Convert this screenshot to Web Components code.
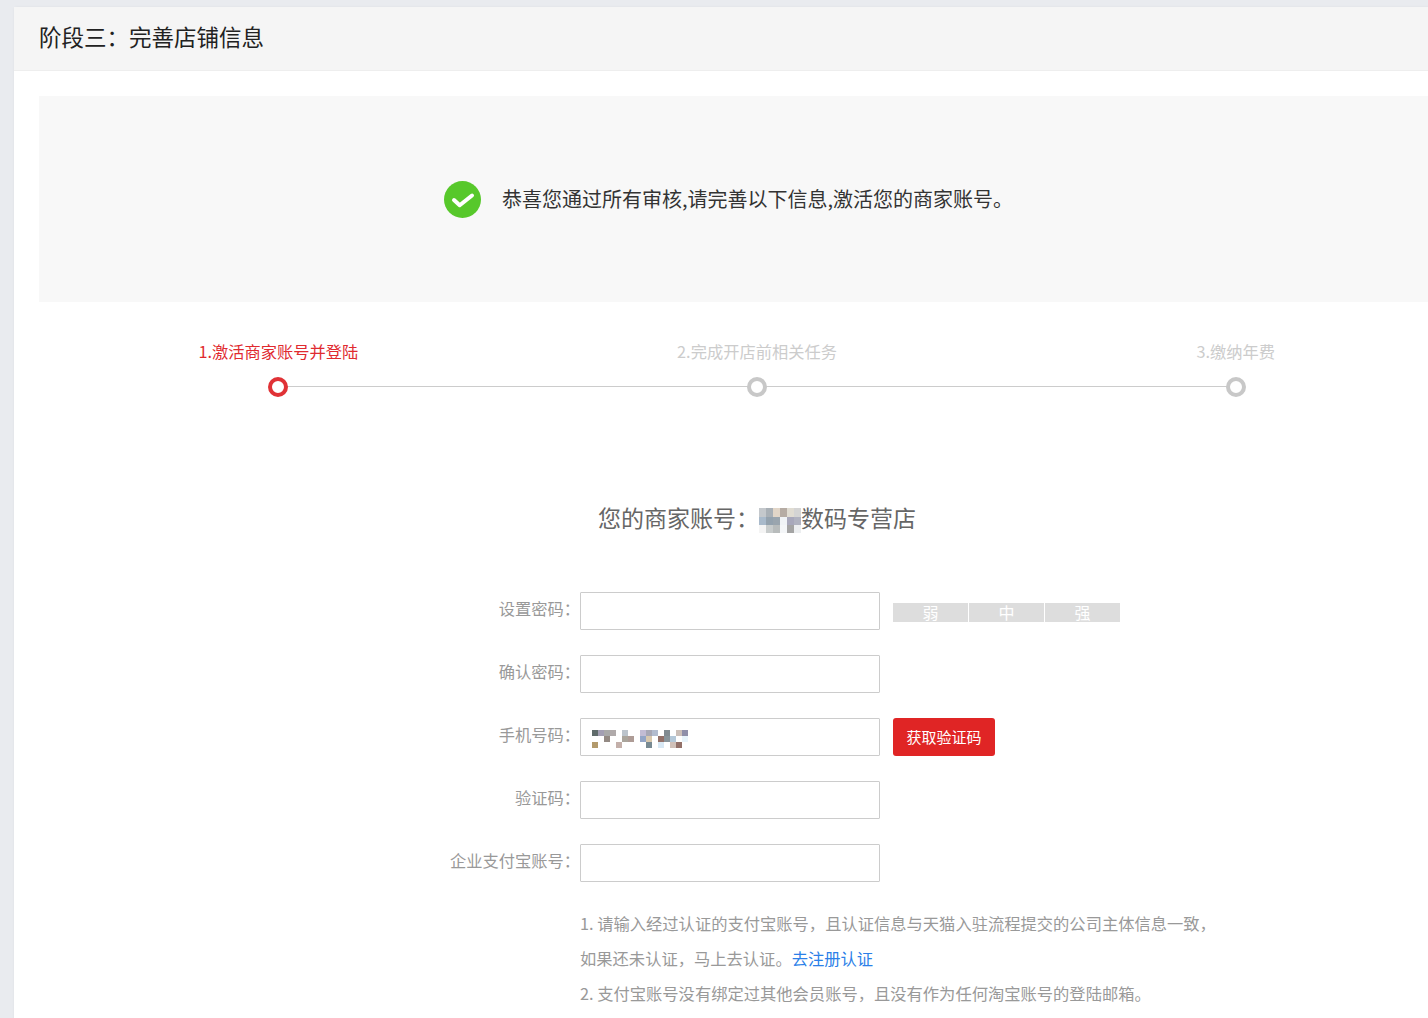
<!DOCTYPE html>
<html lang="zh-CN">
<head>
<meta charset="utf-8">
<title>阶段三</title>
<style>
html, body { margin: 0; height: 100%; overflow: hidden; }
body {
    background: #e9ebef;
    font-family: "Noto Sans CJK SC", "Liberation Sans", sans-serif;
}
</style>
</head>
<body>
<store-panel heading="阶段三：完善店铺信息">
    <notice-banner>恭喜您通过所有审核,请完善以下信息,激活您的商家账号。</notice-banner>
    <step-bar>
        <step-item class="active" active>1.激活商家账号并登陆</step-item>
        <step-item>2.完成开店前相关任务</step-item>
        <step-item last>3.缴纳年费</step-item>
    </step-bar>
    <account-title>
        您的商家账号：<mosaic-blur cell="7" cell-height="8.33" cols="6" colors="c4c8cc a9b0b6 e2d6c8 b6aca4 e0dcd2 d4d4d4|a9bacb 94a2ae 9aa5ae f0f3f6 a8a8bb b0b2c0|f4f4f4 c8cccc b8bcbc f4f6f8 a4a4a4 eceef0"></mosaic-blur>数码专营店
    </account-title>
    <form-row label="设置密码："><strength-meter slot="extra"></strength-meter></form-row>
    <form-row label="确认密码："></form-row>
    <form-row label="手机号码：">
        <mosaic-blur cell="6" cols="16" colors="5f6b6b a39fb3 a9a9a9 b0aaaa . bcc4cc . . c2bcd4 a7a7b5 b2bccf . 818b91 . cbbfb8 8f8fa9|. . 948a84 . . aaa59c ae9c96 . 93a5c6 d8c8ae . 927068 88949a b4c8d8 . e8f4fb|b39a6c . . . c4b0aa . . . . 788a92 . d8e8f4 . d0c0b8 927068 ."></mosaic-blur>
        <red-button slot="extra">获取验证码</red-button>
    </form-row>
    <form-row label="验证码："></form-row>
    <form-row label="企业支付宝账号："></form-row>
    <help-notes>
        <div>1. 请输入经过认证的支付宝账号，且认证信息与天猫入驻流程提交的公司主体信息一致，</div>
        <div>如果还未认证，马上去认证。<a href="#">去注册认证</a></div>
        <div>2. 支付宝账号没有绑定过其他会员账号，且没有作为任何淘宝账号的登陆邮箱。</div>
    </help-notes>
</store-panel>

<script>
function define(name, css, html, setup) {
    customElements.define(name, class extends HTMLElement {
        constructor() {
            super();
            const root = this.attachShadow({mode: 'open'});
            const body = typeof html === 'function' ? html(this) : html;
            root.innerHTML = `<style>${css}</style>${body}`;
            if (setup) setup(this, root);
        }
    });
}

define('store-panel', `
    :host { display: block; width: 1486px; margin: 7px 0 0 14px; background: #fff;
        border-radius: 3px 3px 0 0; box-shadow: 0 0 3px rgba(0,0,0,.05); padding-bottom: 40px; }
    header { height: 63px; box-sizing: border-box; padding: 0 0 6px 25px; display: flex; align-items: center;
        background: #f5f5f5; font-size: 22.5px; color: #222; }
    .rule { height: 1px; background: #eee; }
    .content { padding: 25px 25px 0; }
`, (el) => `<header>${el.getAttribute('heading')}</header><div class="rule"></div><div class="content"><slot></slot></div>`);

define('notice-banner', `
    :host { display: flex; align-items: center; gap: 21px; height: 206px; box-sizing: border-box;
        padding-left: 405px; background: #f8f8f8; font-size: 20px; color: #333; }
    svg { width: 37px; height: 37px; display: block; }
    span { padding-bottom: 2px; }
`, `<svg viewBox="0 0 37 37"><circle cx="18.5" cy="18.5" r="18.5" fill="#57c82b"/><path d="M10 19l5.7 5.2L28 14.5" fill="none" stroke="#fff" stroke-width="4" stroke-linecap="round" stroke-linejoin="round"/></svg><span><slot></slot></span>`);

define('step-bar', `
    :host { display: grid; grid-template-columns: repeat(3, 1fr); padding-top: 39px; }
`, `<slot></slot>`);

define('step-item', `
    :host { display: flex; flex-direction: column; align-items: center; font-size: 16.25px; line-height: 20px; color: #ccc; }
    :host([active]) { color: #e02a2f; }
    .track { position: relative; width: 100%; height: 20px; margin-top: 16px; display: flex; justify-content: center; }
    .dot { position: relative; z-index: 1; width: 20px; height: 20px; box-sizing: border-box; background: #fff;
        border: 4px solid #c8c8c8; border-radius: 50%; }
    :host([active]) .dot { border-color: #e03236; }
    .line { position: absolute; left: 50%; width: 100%; top: 9px; height: 1px; background: #ccc; }
    :host([last]) .line { display: none; }
`, `<div><slot></slot></div><div class="track"><div class="line"></div><div class="dot"></div></div>`);

define('account-title', `
    :host { display: block; margin-top: 103px; margin-bottom: 58px; text-align: center; font-size: 23px;
        line-height: 34px; color: #666; }
`, `<slot></slot>`);

// pixelated blocks standing in for text blurred out of the screenshot
define('mosaic-blur', `
    :host { display: inline-block; vertical-align: middle; line-height: 0; }
    .grid { display: grid; }
`, (el) => {
    const cell = el.getAttribute('cell');
    const cellHeight = el.getAttribute('cell-height') || cell;
    const cols = el.getAttribute('cols');
    const cells = el.getAttribute('colors').split('|').flatMap((row) => row.split(' '))
        .map((c) => `<i style="display:block;height:${cellHeight}px;background:${c === '.' ? 'transparent' : '#' + c}"></i>`).join('');
    return `<div class="grid" style="grid-template-columns:repeat(${cols},${cell}px)">${cells}</div>`;
});

define('form-row', `
    :host { display: grid; grid-template-columns: 541px 300px auto; column-gap: 0; height: 38px; margin-bottom: 25px; }
    label { font-size: 16.25px; line-height: 33px; color: #999; text-align: right; }
    .box { position: relative; height: 38px; }
    input { display: block; width: 100%; height: 100%; box-sizing: border-box; margin: 0; padding: 0 10px;
        background: #fff; border: 1px solid #ccc; border-radius: 1px; outline: 0; }
    .over { position: absolute; left: 12px; top: 12px; display: flex; }
    .extra { padding-left: 13px; }
`, (el) => `<label>${el.getAttribute('label')}</label><div class="box"><input type="text"><div class="over"><slot></slot></div></div><div class="extra"><slot name="extra"></slot></div>`);

define('strength-meter', `
    :host { display: flex; gap: 1px; padding-top: 11px; }
    span { display: block; width: 75px; height: 19px; background: #ddd; color: #fff; font-size: 16px;
        line-height: 18px; text-align: center; }
`, `<span>弱</span><span>中</span><span>强</span>`);

define('red-button', `
    :host { display: block; }
    button { display: block; width: 102px; height: 38px; padding: 0 0 2px; border: 0; border-radius: 3px; background: #e02525;
        color: #fff; font: 15px "Noto Sans CJK SC", "Liberation Sans", sans-serif; }
`, `<button type="button"><slot></slot></button>`);

define('help-notes', `
    :host { display: block; margin: -1px 0 0 541px; font-size: 16.3px; line-height: 35px; color: #999; }
    ::slotted(div) { white-space: nowrap; }
`, `<slot></slot>`);

document.querySelectorAll('help-notes a').forEach((a) => {
    a.style.color = '#2b7fe8';
    a.style.textDecoration = 'none';
});
</script>
</body>
</html>
